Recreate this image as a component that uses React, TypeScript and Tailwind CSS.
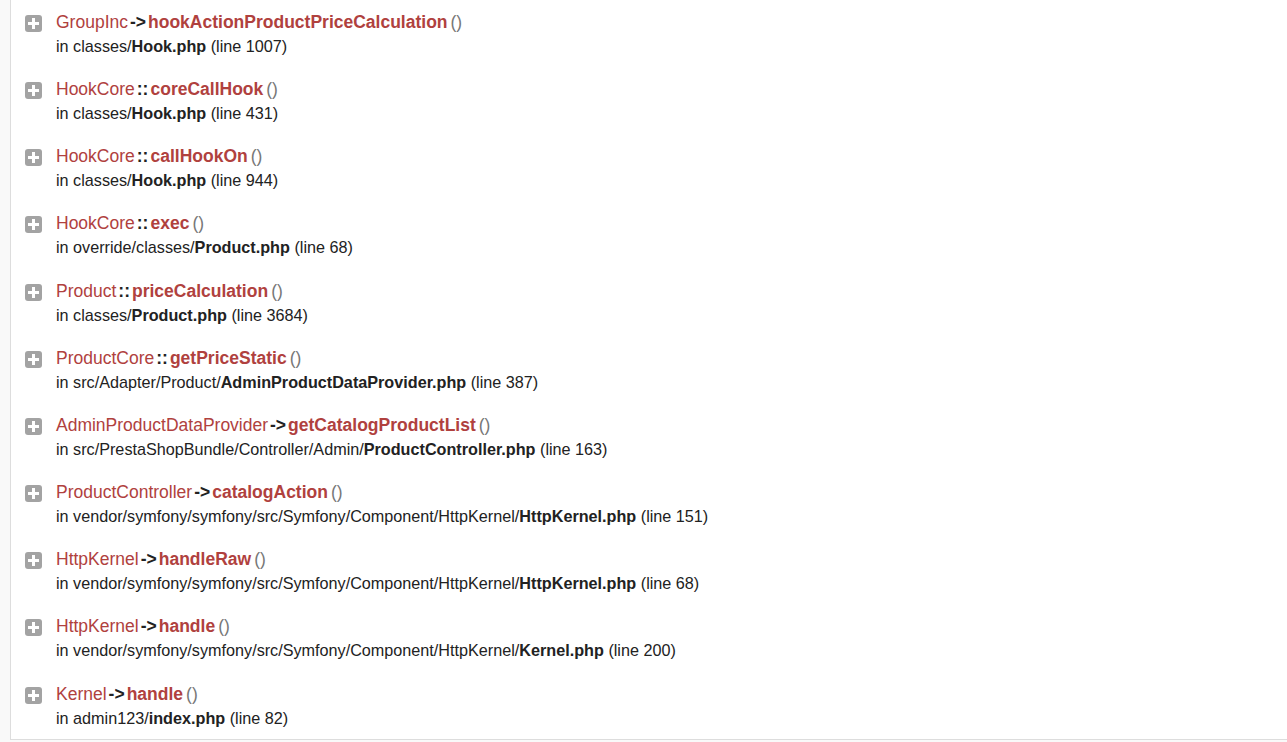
import React from "react";

type Row = {
  cls: string;
  type: string;
  method: string;
  dir: string;
  file: string;
  line: number;
};

const rows: Row[] = [
  { cls: "GroupInc", type: "->", method: "hookActionProductPriceCalculation", dir: "classes/", file: "Hook.php", line: 1007 },
  { cls: "HookCore", type: "::", method: "coreCallHook", dir: "classes/", file: "Hook.php", line: 431 },
  { cls: "HookCore", type: "::", method: "callHookOn", dir: "classes/", file: "Hook.php", line: 944 },
  { cls: "HookCore", type: "::", method: "exec", dir: "override/classes/", file: "Product.php", line: 68 },
  { cls: "Product", type: "::", method: "priceCalculation", dir: "classes/", file: "Product.php", line: 3684 },
  { cls: "ProductCore", type: "::", method: "getPriceStatic", dir: "src/Adapter/Product/", file: "AdminProductDataProvider.php", line: 387 },
  { cls: "AdminProductDataProvider", type: "->", method: "getCatalogProductList", dir: "src/PrestaShopBundle/Controller/Admin/", file: "ProductController.php", line: 163 },
  { cls: "ProductController", type: "->", method: "catalogAction", dir: "vendor/symfony/symfony/src/Symfony/Component/HttpKernel/", file: "HttpKernel.php", line: 151 },
  { cls: "HttpKernel", type: "->", method: "handleRaw", dir: "vendor/symfony/symfony/src/Symfony/Component/HttpKernel/", file: "HttpKernel.php", line: 68 },
  { cls: "HttpKernel", type: "->", method: "handle", dir: "vendor/symfony/symfony/src/Symfony/Component/HttpKernel/", file: "Kernel.php", line: 200 },
  { cls: "Kernel", type: "->", method: "handle", dir: "admin123/", file: "index.php", line: 82 },
];

function PlusIcon() {
  return (
    <svg width="17" height="17" viewBox="0 0 17 17" className="shrink-0">
      <rect x="0" y="0" width="17" height="17" rx="3" fill="#a3a3a3" />
      <rect x="7" y="3" width="3" height="11" fill="#ffffff" />
      <rect x="3" y="7" width="11" height="3" fill="#ffffff" />
    </svg>
  );
}

export default function App() {
  return (
    <div
      className="min-h-[742px] w-full bg-[#f9f9f9] overflow-hidden"
      style={{ fontFamily: '"Liberation Sans", Arial, sans-serif' }}
    >
      <div className="ml-[10px] bg-white border-l border-b border-[#dddddd] pl-[14px]">
        {rows.map((r, i) => (
          <div key={i} className="flex items-start pt-[9.8px] pb-[9.4px]">
            <div className="mt-[5px] mr-[14px]">
              <PlusIcon />
            </div>
            <div>
              <div className="text-[17.5px] leading-[24px] whitespace-nowrap">
                <span className="text-[#b0413e]">{r.cls}</span>
                <span className="text-[#222] font-bold px-[2px]">{r.type}</span>
                <span className="text-[#b0413e] font-bold">{r.method}</span>
                <span className="text-[#777] pl-[3px]">()</span>
              </div>
              <div className="text-[16.2px] leading-[24px] text-[#222] whitespace-nowrap">
                in {r.dir}
                <strong className="font-bold">{r.file}</strong> (line {r.line})
              </div>
            </div>
          </div>
        ))}
      </div>
    </div>
  );
}
